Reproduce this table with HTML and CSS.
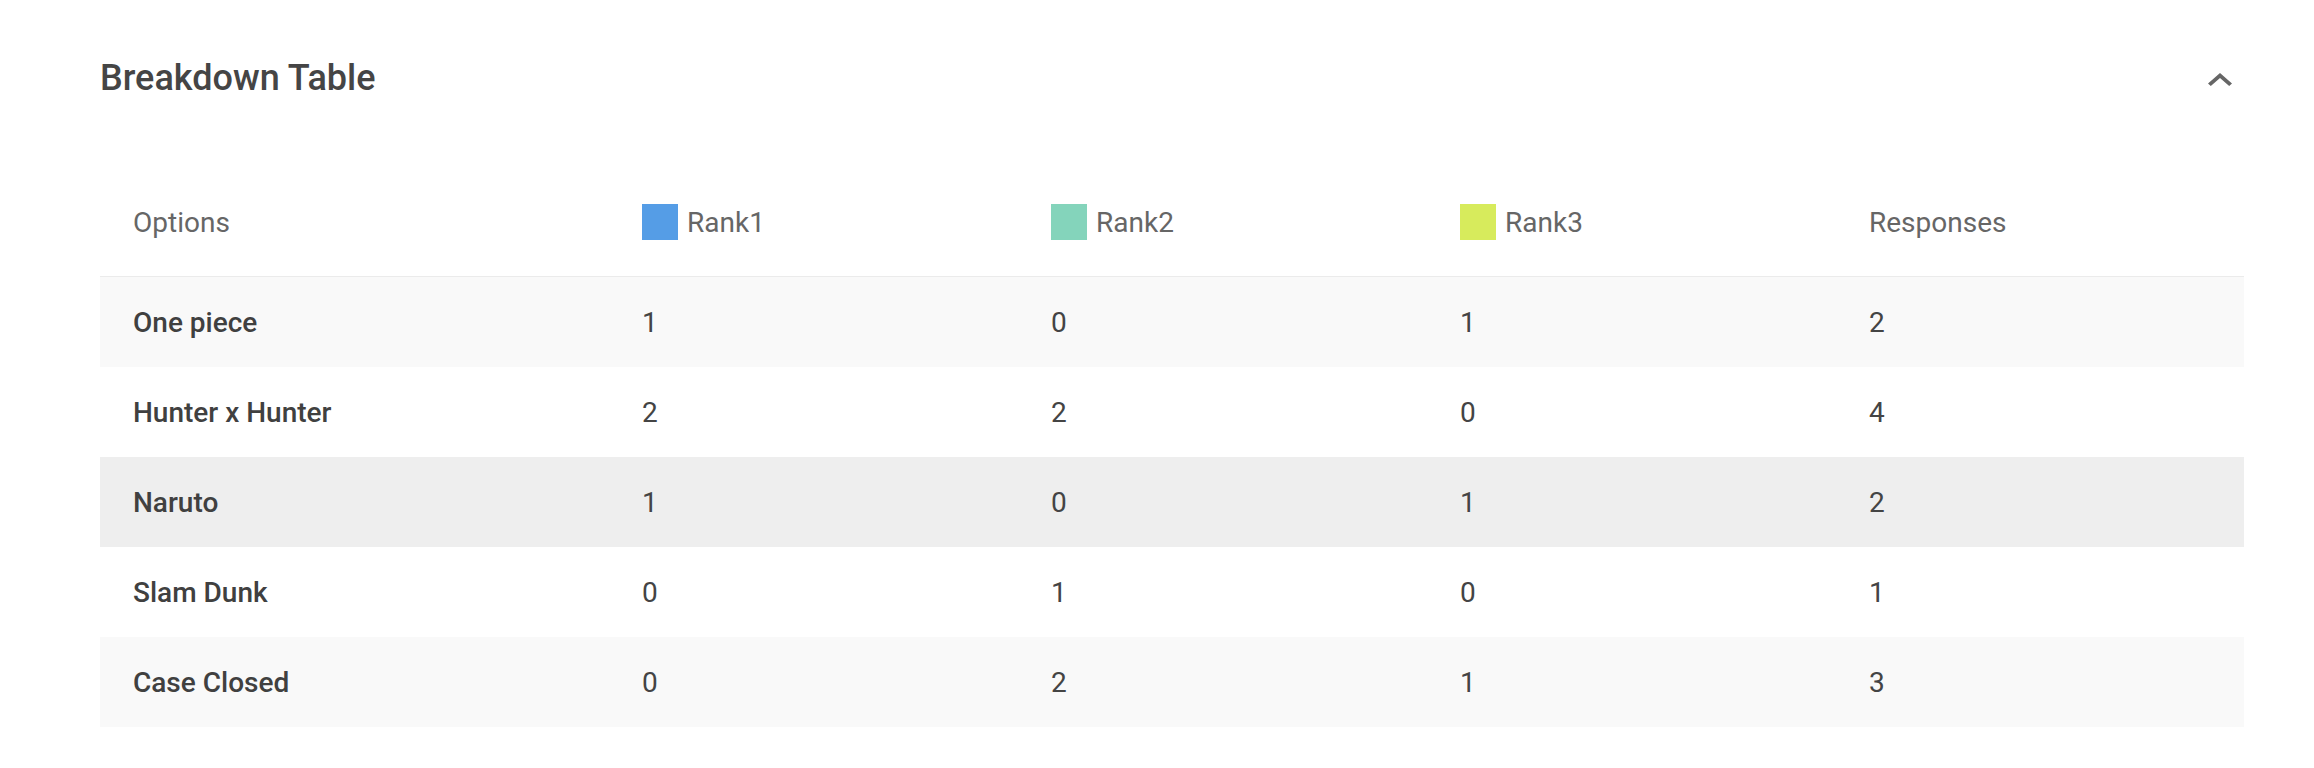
FILE: index.html
```html
<!DOCTYPE html>
<html lang="en">
<head>
<meta charset="utf-8">
<title>Breakdown Table</title>
<link rel="stylesheet" href="styles.css">
</head>
<body>
<section class="panel">
  <header class="panel-head">
    <h2 class="panel-title">Breakdown Table</h2>
    <button class="collapse-btn" aria-label="Collapse">
      <svg width="24" height="13" viewBox="6 8 12 7.41" preserveAspectRatio="none"><path d="M12 8l-6 6 1.41 1.41L12 10.83l4.59 4.58L18 14z" fill="#666"/></svg>
    </button>
  </header>
  <div class="table">
    <div class="row head">
      <div class="cell">Options</div>
      <div class="cell"><span class="swatch rank1"></span>Rank1</div>
      <div class="cell"><span class="swatch rank2"></span>Rank2</div>
      <div class="cell"><span class="swatch rank3"></span>Rank3</div>
      <div class="cell">Responses</div>
    </div>
    <div class="row odd">
      <div class="cell label">One piece</div><div class="cell">1</div><div class="cell">0</div><div class="cell">1</div><div class="cell">2</div>
    </div>
    <div class="row">
      <div class="cell label">Hunter x Hunter</div><div class="cell">2</div><div class="cell">2</div><div class="cell">0</div><div class="cell">4</div>
    </div>
    <div class="row hover">
      <div class="cell label">Naruto</div><div class="cell">1</div><div class="cell">0</div><div class="cell">1</div><div class="cell">2</div>
    </div>
    <div class="row">
      <div class="cell label">Slam Dunk</div><div class="cell">0</div><div class="cell">1</div><div class="cell">0</div><div class="cell">1</div>
    </div>
    <div class="row odd">
      <div class="cell label">Case Closed</div><div class="cell">0</div><div class="cell">2</div><div class="cell">1</div><div class="cell">3</div>
    </div>
  </div>
</section>
</body>
</html>
```
FILE: styles.css
```css
html, body {
  margin: 0;
  padding: 0;
  background: #ffffff;
}
body {
  font-family: Roboto, "Liberation Sans", Arial, sans-serif;
}
.panel {
  padding: 57px 70px 0 100px;
}
.panel-head {
  display: flex;
  align-items: center;
  justify-content: space-between;
  height: 42px;
}
.panel-title {
  margin: 0;
  font-size: 36px;
  font-weight: 500;
  line-height: 42px;
  color: #454545;
}
.collapse-btn {
  width: 48px;
  height: 48px;
  padding: 0;
  border: 0;
  background: transparent;
  display: flex;
  align-items: center;
  justify-content: center;
  margin-top: 3px;
}
.table {
  margin-top: 69px;
}
.row {
  display: grid;
  grid-template-columns: 509px 409px 409px 409px 1fr;
  height: 90px;
  align-items: center;
  font-size: 28px;
  color: #444;
}
.row.head {
  height: 108px;
  border-bottom: 1px solid #ebebeb;
  color: #666;
}
.row.odd {
  background: #f9f9f9;
}
.row.hover {
  background: #eeeeee;
}
.cell {
  padding-left: 33px;
  display: flex;
  align-items: center;
}
.cell.label {
  font-weight: 500;
  color: #404040;
}
.swatch {
  width: 36px;
  height: 36px;
  margin-right: 9px;
  flex: none;
}
.rank1 { background: #559de6; }
.rank2 { background: #84d4bb; }
.rank3 { background: #d7eb5c; }
```
